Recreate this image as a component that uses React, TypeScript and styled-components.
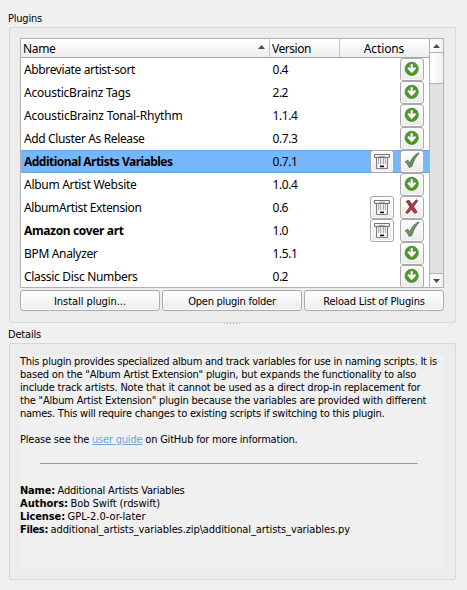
import React from "react";
import styled, { createGlobalStyle } from "styled-components";

const UI_FONT = '"DejaVu Sans Condensed", "DejaVu Sans", sans-serif';
const LIST_FONT = '"Noto Sans", "Open Sans", sans-serif';

const GlobalStyle = createGlobalStyle`
  * { box-sizing: border-box; }
  body { margin: 0; background: #f0f0f0; color: #000; font: 11px/13px ${UI_FONT}; }
  button { font: inherit; color: inherit; padding: 0; margin: 0; }
`;

/* Text tracked so that it takes a given advance width. */
const Tracked = styled.span<{ $bold?: boolean; $list?: boolean }>`
  white-space: pre;
  font-family: ${(p) => (p.$list ? LIST_FONT : UI_FONT)};
  font-size: ${(p) => (p.$list ? 12 : 11)}px;
  font-weight: ${(p) => (p.$bold ? 700 : 400)};
`;

const ruler = document.createElement("canvas").getContext("2d")!;

function Fit({ text, width, bold, list, children }: {
  text: string; width: number; bold?: boolean; list?: boolean; children?: React.ReactNode;
}) {
  ruler.font = `${bold ? 700 : 400} ${list ? 12 : 11}px ${list ? LIST_FONT : UI_FONT}`;
  const spacing = (width - ruler.measureText(text).width) / text.length;
  return (
    <Tracked $bold={bold} $list={list} style={{ letterSpacing: `${spacing}px` }}>
      {children ?? text}
    </Tracked>
  );
}

const Window = styled.main`
  width: 467px;
  height: 590px;
  padding: 12px 11px 10px 8px;
  display: flex;
  flex-direction: column;
  background: #f0f0f0;
`;

const GroupTitle = styled.h2`
  margin: 0;
  height: 15px;
  font: inherit;
`;

const Group = styled.section<{ $height: number }>`
  flex: none;
  margin-left: 1px;
  width: 447px;
  height: ${(p) => p.$height}px;
  padding: 10px 11px 10px 10px;
  border: 1px solid #d7d7d7;
  border-radius: 2px;
  background: #ececec;
  display: flex;
  flex-direction: column;
`;

const Tree = styled.div`
  height: 250px;
  width: 424px;
  border: 1px solid #b1b1b1;
  background: #fff;
  display: grid;
  grid-template-columns: 408px 14px;
  overflow: hidden;
`;

const Table = styled.div`
  height: 248px;
  overflow: hidden;
`;

const HeaderRow = styled.div`
  height: 19px;
  display: grid;
  grid-template-columns: 249px 70px 89px;
  border-bottom: 1px solid #a8a8a8;
  background: linear-gradient(#fff, #f8f8f8 45%, #ededed);
`;

const HeaderCell = styled.div<{ $center?: boolean; $last?: boolean }>`
  display: flex;
  align-items: center;
  justify-content: ${(p) => (p.$center ? "center" : "space-between")};
  padding: ${(p) => (p.$center ? "1px 3px 0 2px" : "1px 4px 0 2px")};
  border-right: ${(p) => (p.$last ? "0" : "1px solid #c5c5c5")};
`;

const SortMark = styled.span`
  display: flex;
  padding-bottom: 3px;
`;

const Row = styled.div<{ $selected?: boolean }>`
  height: 23px;
  display: grid;
  grid-template-columns: 249px 70px 89px;
  background: ${(p) => (p.$selected ? "#76b7fb" : "#fff")};
  box-shadow: ${(p) => (p.$selected ? "inset 0 1px #69a5e4, inset 0 -1px #69a5e4" : "none")};
`;

const Cell = styled.div<{ $tight?: boolean }>`
  padding: 4px 0 0 ${(p) => (p.$tight ? 2.5 : 3)}px;
  line-height: 16px;
`;

const Actions = styled.div`
  display: flex;
  justify-content: flex-end;
  gap: 6px;
  padding-right: 5px;
`;

const ToolButton = styled.button`
  width: 24px;
  height: 23px;
  padding-bottom: 2px;
  border: 1px solid #aaa;
  border-radius: 3px;
  background: linear-gradient(#fefefe, #ebebeb);
  box-shadow: inset 0 0 0 1px #fafafa;
  display: flex;
  align-items: center;
  justify-content: center;
`;

const ScrollBar = styled.div`
  display: grid;
  grid-template-rows: 14px 31px 1fr 14px;
  border-left: 1px solid #b1b1b1;
  background: #e2e2e2;
`;

const ScrollPart = styled.div<{ $edge: "top" | "bottom" }>`
  display: flex;
  align-items: center;
  justify-content: center;
  background: linear-gradient(90deg, #fff, #f1f1f1);
  border-${(p) => p.$edge}: 1px solid #b1b1b1;
`;

const ButtonRow = styled.div`
  margin-top: 2px;
  display: grid;
  grid-template-columns: 140px 140px 140px;
  gap: 2px;
`;

const PushButton = styled.button`
  height: 21px;
  padding-top: 1px;
  border: 1px solid #aaa;
  border-radius: 3px;
  background: linear-gradient(#fefefe, #ededed);
  box-shadow: inset 0 0 0 1px #fbfbfb;
`;

const Splitter = styled.div`
  height: 5px;
  display: flex;
  justify-content: center;
  margin-left: 1px;
`;

const Browser = styled.article`
  margin-top: 1px;
  width: 424px;
  height: 213px;
  background: #f0f0f0;
`;

const Paragraph = styled.p`
  margin: 0 0 13px;
  display: flex;
  flex-direction: column;
`;

const Link = styled.a`
  color: #6ea5d8;
  text-decoration: underline;
`;

const Rule = styled.hr`
  margin: 17px 26px 20px 20px;
  height: 1px;
  border: 0;
  background: #9c9c9c;
`;

const Fact = styled.div`
  height: 13px;
  display: flex;
  gap: 2.5px;
`;

const Triangle = ({ down }: { down?: boolean }) => (
  <svg width="7" height="4" viewBox="0 0 7 4">
    <path d={down ? "M0 0H7L3.5 4Z" : "M0 4H7L3.5 0Z"} fill="#4c4c4c" />
  </svg>
);

const DownloadIcon = () => (
  <svg width="16" height="16" viewBox="0 0 16 16">
    <defs>
      <linearGradient id="green" x1="0" y1="0" x2="0" y2="1">
        <stop offset="0" stopColor="#4d963a" />
        <stop offset="1" stopColor="#529a20" />
      </linearGradient>
    </defs>
    <circle cx="7.7" cy="7.8" r="6.6" fill="url(#green)" stroke="#367522" strokeWidth=".7" />
    <path d="M6.6 3.2H8.8V7.2L11 5.9L12 7.5L7.7 12.2L3.4 7.5L4.4 5.9L6.6 7.2Z" fill="#fff" />
  </svg>
);

const CheckIcon = () => (
  <svg width="16" height="17" viewBox="0 0 16 17">
    <path d="M1.2 9.8L3.7 8.1L5.9 11C7.6 6.5 10 3 14.5 .8L15.2 1.4C11.5 4.7 9.7 8.8 7.9 14.5L5.1 15.4C4.2 13.3 3 11.4 1.2 9.8Z" fill="#71905f" stroke="#50634a" strokeWidth=".7" />
  </svg>
);

const CrossIcon = () => (
  <svg width="16" height="16" viewBox="0 0 16 16">
    <path d="M2.3 2.2L5.3 1.4L7.9 5.7L12.3 .8L13.7 1.8L9.4 7.6L13.1 13L10.7 14.3L7.5 10L3.4 14.5L1.8 13.4L6 7.9Z" fill="#b33749" stroke="#732e36" strokeWidth=".9" />
  </svg>
);

const TrashIcon = () => (
  <svg width="16" height="16" viewBox="0 0 16 16">
    <path d="M2.5 3.5H13.5V15.5H2.5Z" fill="#ececec" stroke="#808080" />
    <path d="M4.5 5V12M11.5 5V12" stroke="#b4b4b4" />
    <path d="M6 5H7V11H6ZM9 5H10V11H9Z" fill="#a6a6a6" />
    <path d="M.5 1.5H15.5V4.5H.5Z" fill="#e8e8e8" stroke="#747474" />
    <path d="M2 2.5H5M11 2.5H14" stroke="#fff" />
    <path d="M5 3.5H11" stroke="#a8a8a8" />
    <path d="M4 11H12V15H4Z" fill="#f8f8f8" />
    <path d="M6 12.6H10V14.2H6Z" fill="#000" />
  </svg>
);

const GripDots = () => (
  <svg width="18" height="2" viewBox="0 0 18 2">
    <path d="M0 .5H18" stroke="#aaa" strokeDasharray="1 2" />
  </svg>
);

type Status = "download" | "on" | "off";
const plugins: { name: string; width: number; version: string; vw: number; status: Status; bold?: boolean; selected?: boolean }[] = [
  { name: "Abbreviate artist-sort", width: 111, version: "0.4", vw: 15.5, status: "download" },
  { name: "AcousticBrainz Tags", width: 106.5, version: "2.2", vw: 15.5, status: "download" },
  { name: "AcousticBrainz Tonal-Rhythm", width: 158.5, version: "1.1.4", vw: 25, status: "download" },
  { name: "Add Cluster As Release", width: 120.5, version: "0.7.3", vw: 25, status: "download" },
  { name: "Additional Artists Variables", width: 148.5, version: "0.7.1", vw: 25, status: "on", bold: true, selected: true },
  { name: "Album Artist Website", width: 112.5, version: "1.0.4", vw: 25, status: "download" },
  { name: "AlbumArtist Extension", width: 117.5, version: "0.6", vw: 15.5, status: "off" },
  { name: "Amazon cover art", width: 99.5, version: "1.0", vw: 15.5, status: "on", bold: true },
  { name: "BPM Analyzer", width: 73.5, version: "1.5.1", vw: 25, status: "download" },
  { name: "Classic Disc Numbers", width: 113.5, version: "0.2", vw: 15.5, status: "download" },
];

const statusIcon = { download: <DownloadIcon />, on: <CheckIcon />, off: <CrossIcon /> };

const description: [string, number][] = [
  ["This plugin provides specialized album and track variables for use in naming scripts. It is", 417],
  ['based on the "Album Artist Extension" plugin, but expands the functionality to also', 396],
  ["include track artists. Note that it cannot be used as a direct drop-in replacement for", 400.5],
  ['the "Album Artist Extension" plugin because the variables are provided with different', 406],
  ["names. This will require changes to existing scripts if switching to this plugin.", 364.5],
];

const facts: [string, number, string, number][] = [
  ["Name:", 35, "Additional Artists Variables", 127],
  ["Authors:", 48, "Bob Swift (rdswift)", 89.5],
  ["License:", 45, "GPL-2.0-or-later", 78],
  ["Files:", 28, "additional_artists_variables.zip\\additional_artists_variables.py", 299.5],
];

export default function App() {
  return (
    <Window>
      <GlobalStyle />
      <GroupTitle><Fit text="Plugins" width={34} /></GroupTitle>
      <Group $height={296}>
        <Tree>
          <Table>
            <HeaderRow>
              <HeaderCell>
                <Fit list text="Name" width={32.5} />
                <SortMark><Triangle /></SortMark>
              </HeaderCell>
              <HeaderCell><Fit list text="Version" width={39} /></HeaderCell>
              <HeaderCell $center $last><Fit list text="Actions" width={40.5} /></HeaderCell>
            </HeaderRow>
            {plugins.map((p) => (
              <Row key={p.name} $selected={p.selected}>
                <Cell><Fit list bold={p.bold} text={p.name} width={p.width} /></Cell>
                <Cell $tight><Fit list text={p.version} width={p.vw} /></Cell>
                <Actions>
                  {p.status !== "download" && <ToolButton aria-label="Uninstall"><TrashIcon /></ToolButton>}
                  <ToolButton aria-label={p.status}>{statusIcon[p.status]}</ToolButton>
                </Actions>
              </Row>
            ))}
          </Table>
          <ScrollBar>
            <ScrollPart $edge="bottom"><Triangle /></ScrollPart>
            <ScrollPart $edge="bottom" />
            <span />
            <ScrollPart $edge="top"><Triangle down /></ScrollPart>
          </ScrollBar>
        </Tree>
        <ButtonRow>
          <PushButton><Fit text="Install plugin..." width={72} /></PushButton>
          <PushButton><Fit text="Open plugin folder" width={87.5} /></PushButton>
          <PushButton><Fit text="Reload List of Plugins" width={101.5} /></PushButton>
        </ButtonRow>
      </Group>
      <Splitter><GripDots /></Splitter>
      <GroupTitle><Fit text="Details" width={33} /></GroupTitle>
      <Group $height={237}>
        <Browser>
          <Paragraph>
            {description.map(([text, width]) => <Fit key={text} text={text} width={width} />)}
          </Paragraph>
          <Paragraph>
            <Fit text="Please see the user guide on GitHub for more information." width={277.5}>
              Please see the <Link>user guide</Link> on GitHub for more information.
            </Fit>
          </Paragraph>
          <Rule />
          {facts.map(([label, lw, value, vw]) => (
            <Fact key={label}>
              <Fit bold text={label} width={lw} />
              <Fit text={value} width={vw} />
            </Fact>
          ))}
        </Browser>
      </Group>
    </Window>
  );
}
